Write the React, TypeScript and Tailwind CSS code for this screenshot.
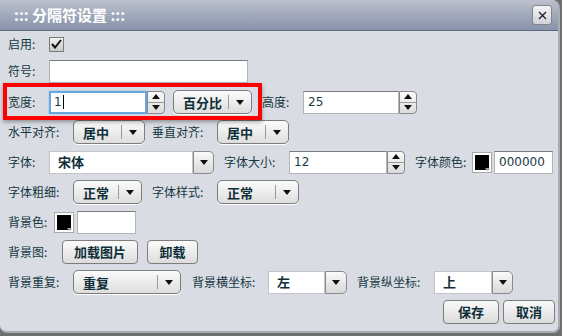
import React from "react";

const labelCls = "text-[12px] text-[#163742] whitespace-nowrap";
const font = { fontFamily: '"Noto Sans CJK SC", "Liberation Sans", sans-serif' };

function Arrow({ up = false }: { up?: boolean }) {
  return (
    <svg width="8" height="5" viewBox="0 0 8 5">
      {up ? <polygon points="0,5 8,5 4,0" fill="#111" /> : <polygon points="0,0 8,0 4,5" fill="#111" />}
    </svg>
  );
}

function Select({ w, text }: { w: string; text: string }) {
  return (
    <div
      className={`${w} h-[24px] flex items-center rounded-[5px] border border-[#7d7d7d] bg-gradient-to-b from-[#fbfbfb] to-[#dedede] shadow-[0_1px_0_#ffffff]`}
    >
      <span className="flex-1 pl-[9px] text-[13px] font-bold text-[#0f2f38] leading-none">{text}</span>
      <span className="w-px h-[14px] bg-[#9a9a9a]" />
      <span className="w-[22px] flex items-center justify-center">
        <Arrow />
      </span>
    </div>
  );
}

function TextInput({ w, value, focus = false }: { w: string; value?: string; focus?: boolean }) {
  return (
    <div
      className={`${w} h-[23px] flex items-center bg-white ${
        focus
          ? "border-2 border-[#6aa6e0] shadow-[0_0_2px_#8fc0f0]"
          : "border border-[#b4b4b4] border-t-[#7a7a7a]"
      }`}
    >
      <span className={`${focus ? "pl-[3px]" : "pl-[4px]"} text-[12px] text-[#183a44] leading-none`} style={{ fontFamily: '"DejaVu Sans", sans-serif' }}>
        {value}
      </span>
      {focus && <span className="w-px h-[14px] bg-black ml-[1px]" />}
    </div>
  );
}

function Spinner() {
  return (
    <div className="w-[18px] h-[23px] flex flex-col rounded-r-[4px] border border-[#8a8a8a] overflow-hidden bg-gradient-to-b from-[#fafafa] to-[#dcdcdc]">
      <div className="flex-1 flex items-center justify-center border-b border-[#9a9a9a]">
        <Arrow up />
      </div>
      <div className="flex-1 flex items-center justify-center">
        <Arrow />
      </div>
    </div>
  );
}

function DropBtn({ w }: { w: string }) {
  return (
    <div className={`${w} h-[23px] flex items-center justify-center rounded-r-[5px] border border-[#8a8a8a] bg-gradient-to-b from-[#fafafa] to-[#d8d8d8]`}>
      <Arrow />
    </div>
  );
}

function Swatch() {
  return (
    <div className="w-[20px] h-[21px] relative border border-[#a8a8a8] bg-white p-[2px]">
      <div className="w-full h-full bg-black" />
      <svg className="absolute right-[1px] bottom-[1px]" width="5" height="3" viewBox="0 0 5 3">
        <polygon points="0,0 5,0 2.5,3" fill="#aaa" />
      </svg>
    </div>
  );
}

function Btn({ w, text }: { w: string; text: string }) {
  return (
    <div className={`${w} h-[24px] flex items-center justify-center rounded-[4px] border border-[#7d7d7d] bg-gradient-to-b from-[#fbfbfb] to-[#dcdcdc] text-[13px] font-bold text-[#0f2f38]`}>
      {text}
    </div>
  );
}

export default function App() {
  return (
    <div className="w-[562px] h-[336px] bg-[#6f6f6f] relative overflow-hidden" style={font}>
      <div className="w-[560px] h-[333px] bg-[#d9dde3] rounded-b-[7px] rounded-tr-[8px] border-r-2 border-b-2 border-[#a9acb2] flex flex-col relative overflow-hidden">
        {/* title */}
        <div className="h-[31px] shrink-0 flex items-center justify-between bg-gradient-to-b from-[#bcc0cb] to-[#8793ab] border-b border-[#5f6a7e] pl-[14px] pr-[6px]">
          <span className="text-white font-bold text-[15px]">::: 分隔符设置 :::</span>
          <div className="w-[20px] h-[20px] rounded-[3px] border border-[#80848c] bg-gradient-to-b from-[#f4f4f4] to-[#cfd2d8] flex items-center justify-center">
            <svg width="9" height="9" viewBox="0 0 9 9">
              <path d="M1 1L8 8M8 1L1 8" stroke="#222" strokeWidth="1.3" />
            </svg>
          </div>
        </div>

        <div className="flex flex-col pl-[8px]">
          {/* row1 */}
          <div className="h-[24px] mt-[1px] flex items-center">
            <span className={`${labelCls} w-[41px]`}>启用:</span>
            <div className="w-[15px] h-[15px] border border-[#7a7a7a] bg-gradient-to-b from-[#f2f2f2] to-[#c9c9c9] flex items-center justify-center">
              <svg width="11" height="10" viewBox="0 0 11 10">
                <path d="M1 5L4 8.5L10 1" stroke="#111" strokeWidth="2" fill="none" />
              </svg>
            </div>
          </div>
          {/* row2 */}
          <div className="h-[24px] mt-[3px] flex items-center">
            <span className={`${labelCls} w-[41px]`}>符号:</span>
            <TextInput w="w-[199px]" />
          </div>
          {/* row3 */}
          <div className="h-[24px] mt-[7px] flex items-center">
            <span className={`${labelCls} w-[41px]`}>宽度:</span>
            <TextInput w="w-[98px]" value="1" focus />
            <Spinner />
            <div className="w-[8px]" />
            <Select w="w-[79px]" text="百分比" />
            <div className="w-[10px]" />
            <span className={`${labelCls} w-[41px]`}>高度:</span>
            <TextInput w="w-[96px]" value="25" />
            <Spinner />
          </div>
          {/* row4 */}
          <div className="h-[24px] mt-[6px] flex items-center">
            <span className={`${labelCls} w-[65px]`}>水平对齐:</span>
            <Select w="w-[72px]" text="居中" />
            <div className="w-[7px]" />
            <span className={`${labelCls} w-[65px]`}>垂直对齐:</span>
            <Select w="w-[72px]" text="居中" />
          </div>
          {/* row5 */}
          <div className="h-[24px] mt-[6px] flex items-center">
            <span className={`${labelCls} w-[41px]`}>字体:</span>
            <div className="w-[144px] h-[23px] bg-white border border-[#c4c4c4] flex items-center pl-[8px] text-[13px] font-bold text-[#0f2f38]">宋体</div>
            <DropBtn w="w-[21px]" />
            <div className="w-[10px]" />
            <span className={`${labelCls} w-[65px]`}>字体大小:</span>
            <TextInput w="w-[98px]" value="12" />
            <Spinner />
            <div className="w-[10px]" />
            <span className={`${labelCls} w-[57px]`}>字体颜色:</span>
            <Swatch />
            <div className="w-[2px]" />
            <TextInput w="w-[59px]" value="000000" />
          </div>
          {/* row6 */}
          <div className="h-[24px] mt-[6px] flex items-center">
            <span className={`${labelCls} w-[65px]`}>字体粗细:</span>
            <Select w="w-[69px]" text="正常" />
            <div className="w-[10px]" />
            <span className={`${labelCls} w-[65px]`}>字体样式:</span>
            <Select w="w-[82px]" text="正常" />
          </div>
          {/* row7 */}
          <div className="h-[24px] mt-[6px] flex items-center">
            <span className={`${labelCls} w-[46px]`}>背景色:</span>
            <Swatch />
            <div className="w-[3px]" />
            <TextInput w="w-[59px]" />
          </div>
          {/* row8 */}
          <div className="h-[24px] mt-[6px] flex items-center">
            <span className={`${labelCls} w-[54px]`}>背景图:</span>
            <Btn w="w-[76px]" text="加载图片" />
            <div className="w-[9px]" />
            <Btn w="w-[51px]" text="卸载" />
          </div>
          {/* row9 */}
          <div className="h-[24px] mt-[6px] flex items-center">
            <span className={`${labelCls} w-[65px]`}>背景重复:</span>
            <Select w="w-[108px]" text="重复" />
            <div className="w-[11px]" />
            <span className={`${labelCls} w-[76px]`}>背景横坐标:</span>
            <div className="w-[57px] h-[23px] bg-white border border-[#c4c4c4] flex items-center pl-[8px] text-[13px] font-bold text-[#0f2f38]">左</div>
            <DropBtn w="w-[22px]" />
            <div className="w-[10px]" />
            <span className={`${labelCls} w-[77px]`}>背景纵坐标:</span>
            <div className="w-[58px] h-[23px] bg-white border border-[#c4c4c4] flex items-center pl-[8px] text-[13px] font-bold text-[#0f2f38]">上</div>
            <DropBtn w="w-[21px]" />
          </div>
          {/* row10 */}
          <div className="h-[24px] mt-[6px] flex items-center justify-end pr-[3px] gap-[4px]">
            <Btn w="w-[56px]" text="保存" />
            <Btn w="w-[52px]" text="取消" />
          </div>
        </div>
      </div>
      {/* red highlight overlay */}
      <div className="absolute left-[3px] top-[83px] w-[259px] h-[37px] border-[4px] border-[#ff0000] shadow-[0_2px_4px_rgba(0,0,0,0.35)] pointer-events-none" />
    </div>
  );
}
